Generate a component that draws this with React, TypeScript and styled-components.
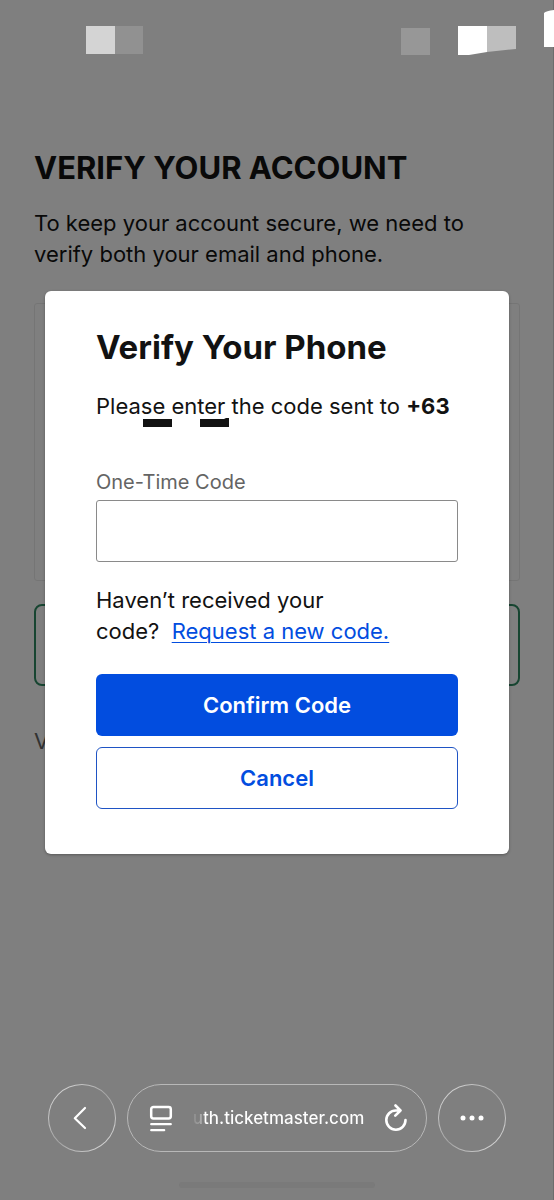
import React from "react";
import styled, { createGlobalStyle } from "styled-components";

const GlobalStyle = createGlobalStyle`
  *, *::before, *::after { box-sizing: border-box; }
  body {
    margin: 0;
    background: #ffffff;
    color: #121212;
    font-family: Inter, "Liberation Sans", sans-serif;
    font-size: 22px;
    line-height: 31px;
  }
  h1, h2, p { margin: 0; }
  button, input { font: inherit; }
`;

const Screen = styled.div`
  position: relative;
  min-height: 100vh;
`;

const Page = styled.main`
  display: flex;
  flex-direction: column;
  padding: 148px 34px 0;
`;

const PageTitle = styled.h1`
  font-size: 31px;
  line-height: 40px;
  font-weight: 700;
`;

const Intro = styled.p`
  margin-top: 20px;
`;

const DetailsCard = styled.section`
  height: 278px;
  margin-top: 33px;
  border: 1px solid #ebebeb;
  border-radius: 3px;
`;

const OutlineAction = styled.button`
  height: 82px;
  margin-top: 23px;
  border: 2px solid #2f8a62;
  border-radius: 8px;
  background: transparent;
`;

const Footnote = styled.p`
  margin-top: 40px;
  color: #646464;
`;

const Overlay = styled.div`
  position: absolute;
  inset: 0;
  display: flex;
  flex-direction: column;
  background: rgba(0, 0, 0, 0.502);
  box-shadow: inset -1px 0 0 rgba(0, 0, 0, 0.15);
`;

const StatusBar = styled.header`
  display: flex;
  align-items: flex-start;
  justify-content: space-between;
  height: 64px;
  padding: 10px 0 0 86px;
`;

const ModalArea = styled.div`
  flex: 1;
  padding: 227px 45px 0;
`;

const Modal = styled.div`
  display: flex;
  flex-direction: column;
  padding: 36px 51px 45px;
  border-radius: 6px;
  background: #ffffff;
  box-shadow: 0 1px 3px rgba(0, 0, 0, 0.3);
`;

const ModalTitle = styled.h2`
  font-size: 33px;
  line-height: 40px;
  font-weight: 700;
`;

const Message = styled.p`
  position: relative;
  margin-top: 24px;
  white-space: nowrap;
`;

const Redaction = styled.svg`
  position: absolute;
  left: 47px;
  bottom: -5px;
`;

const Form = styled.form`
  display: flex;
  flex-direction: column;
  margin-top: 48px;
`;

const Label = styled.label`
  color: #646464;
  font-size: 20px;
  line-height: 24px;
`;

const CodeInput = styled.input`
  width: 100%;
  height: 62px;
  margin-top: 6px;
  padding: 0 16px;
  border: 1px solid #8a8a8a;
  border-radius: 3px;
  background: #ffffff;
`;

const Resend = styled.p`
  margin: 23px 0 27px;
`;

const ResendLink = styled.a`
  color: #024ddf;
  text-decoration: underline;
  text-decoration-thickness: 1px;
  text-underline-offset: 3px;
`;

const ActionButton = styled.button<{ $primary?: boolean }>`
  height: 62px;
  margin-top: ${(p) => (p.$primary ? "0" : "11px")};
  border: ${(p) => (p.$primary ? "0" : "1px solid #1f54c4")};
  border-radius: 6px;
  background: ${(p) => (p.$primary ? "#024ddf" : "#ffffff")};
  color: ${(p) => (p.$primary ? "#ffffff" : "#024ddf")};
  font-weight: 600;
`;

const BrowserBar = styled.nav`
  display: flex;
  gap: 11px;
  padding: 0 48px;
  color: #ffffff;
`;

const glass = `
  border: 1px solid transparent;
  background:
    linear-gradient(#7f7f7f, #7f7f7f) padding-box,
    linear-gradient(135deg, #d0d0d0 15%, #a4a4a4 50%, #d0d0d0 85%) border-box;
`;

const RoundButton = styled.button`
  ${glass}
  display: flex;
  align-items: center;
  justify-content: center;
  flex: none;
  width: 68px;
  height: 68px;
  padding: 0;
  border-radius: 50%;
  color: inherit;
`;

const AddressPill = styled.div`
  display: flex;
  align-items: center;
  justify-content: space-between;
  flex: 1;
  min-width: 0;
  height: 68px;
  padding: 0 17px 0 20px;
  border: 1px solid #b8b8b8;
  border-radius: 34px;
`;

const PillButton = styled.button`
  display: flex;
  padding: 0;
  border: 0;
  background: none;
  color: inherit;
`;

const Address = styled.span`
  font-size: 17px;
  line-height: 24px;
  font-weight: 500;
  background: linear-gradient(90deg, #8a8a8a, #b4b4b4 10px, #ffffff 12px);
  background-clip: text;
  color: transparent;
`;

const HomeIndicator = styled.div`
  width: 196px;
  height: 6px;
  margin: 30px auto 12px;
  border-radius: 3px;
  background: #7a7a7a;
`;

const StatusLeft = () => (
  <svg width="58" height="44" viewBox="0 0 58 44" aria-hidden="true">
    <path d="M0 16h29v28H0z" fill="#d4d4d4" />
    <path d="M29 16h28v28H29z" fill="#919191" />
  </svg>
);

const StatusRight = () => (
  <svg width="153" height="46" viewBox="0 0 153 46" aria-hidden="true">
    <path d="M0 18h29v27H0z" fill="#979797" />
    <path d="M57 16h29v26l-18 3H57z" fill="#fff" />
    <path d="M86 16h29v23l-29 3z" fill="#bebebe" />
    <path d="M153 0q-8 1-10 3v34h10z" fill="#fff" />
  </svg>
);

export default function App() {
  return (
    <>
      <GlobalStyle />
      <Screen>
        <Page>
          <PageTitle>VERIFY YOUR ACCOUNT</PageTitle>
          <Intro>To keep your account secure, we need to verify both your email and phone.</Intro>
          <DetailsCard />
          <OutlineAction type="button" />
          <Footnote>V</Footnote>
        </Page>
        <Overlay>
          <StatusBar>
            <StatusLeft />
            <StatusRight />
          </StatusBar>
          <ModalArea>
            <Modal role="dialog" aria-modal="true" aria-labelledby="modal-title">
              <ModalTitle id="modal-title">Verify Your Phone</ModalTitle>
              <Message>
                Please enter the code sent to <strong>+63</strong>
                <Redaction width="87" height="9" viewBox="0 0 87 9" aria-hidden="true">
                  <path d="M0 1h29v8H0zM57 1h24l2-1h3v9H57z" fill="#121212" />
                </Redaction>
              </Message>
              <Form>
                <Label htmlFor="code">One-Time Code</Label>
                <CodeInput id="code" type="text" inputMode="numeric" />
                <Resend>
                  Haven’t received your
                  <br />
                  code?&nbsp; <ResendLink href="#resend">Request a new code.</ResendLink>
                </Resend>
                <ActionButton type="submit" $primary>
                  Confirm Code
                </ActionButton>
                <ActionButton type="button">Cancel</ActionButton>
              </Form>
            </Modal>
          </ModalArea>
          <BrowserBar>
            <RoundButton type="button" aria-label="Back">
              <svg width="18" height="24" viewBox="0 0 18 24" fill="none" stroke="currentColor" strokeWidth="2.200" strokeLinecap="round" strokeLinejoin="round">
                <path d="M12 2 1.800 12.200 12 22" />
              </svg>
            </RoundButton>
            <AddressPill>
              <PillButton type="button" aria-label="Page menu">
                <svg width="26" height="27" viewBox="0 0 26 27" fill="none" stroke="currentColor" strokeWidth="2.500" strokeLinecap="round">
                  <rect x="3.200" y="2" width="19.600" height="11.500" rx="2.200" />
                  <path d="M3.200 19.200h19.600M3.200 25.200h13" strokeWidth="2.200" />
                </svg>
              </PillButton>
              <Address>uth.ticketmaster.com</Address>
              <PillButton type="button" aria-label="Reload">
                <svg width="26" height="28" viewBox="0 0 26 28" fill="none" stroke="currentColor" strokeWidth="2.600" strokeLinecap="round" strokeLinejoin="round">
                  <path d="M22.500 16A9.600 9.600 0 1 1 13 6.500h4.500M12.500 1.500l5 5-5.200 5.200" />
                </svg>
              </PillButton>
            </AddressPill>
            <RoundButton type="button" aria-label="More">
              <svg width="24" height="6" viewBox="0 0 24 6" fill="currentColor">
                <circle cx="3" cy="3" r="2.500" />
                <circle cx="12" cy="3" r="2.500" />
                <circle cx="21" cy="3" r="2.500" />
              </svg>
            </RoundButton>
          </BrowserBar>
          <HomeIndicator />
        </Overlay>
      </Screen>
    </>
  );
}
